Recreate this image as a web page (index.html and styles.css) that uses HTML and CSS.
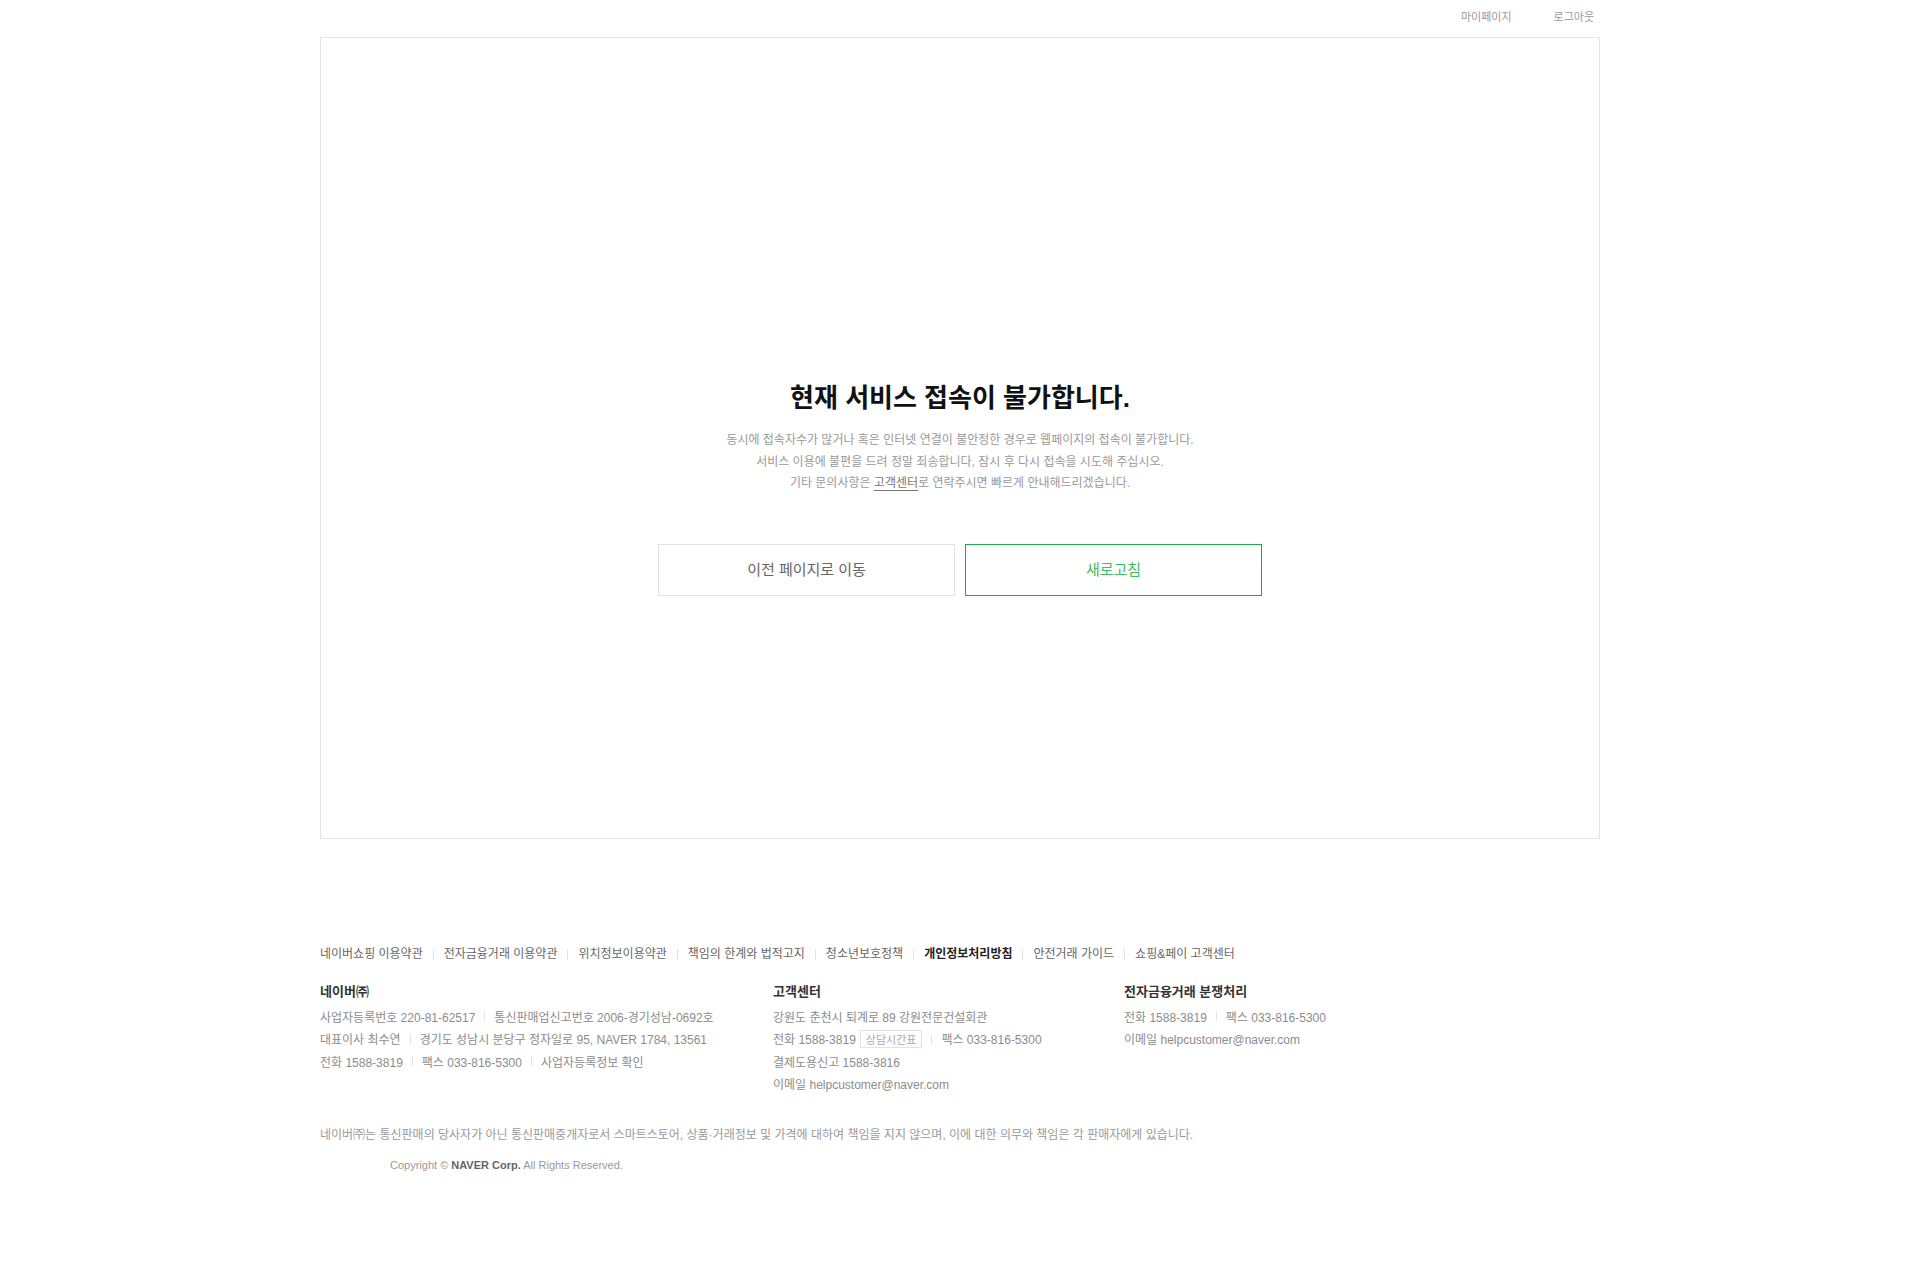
FILE: index.html
```html
<!DOCTYPE html>
<html lang="ko">
<head>
<meta charset="utf-8">
<title>네이버 스마트스토어</title>
<link rel="stylesheet" href="styles.css">
</head>
<body>
<div class="wrap">
  <header class="top">
    <a class="top-link" href="#">마이페이지</a>
    <a class="top-link" href="#">로그아웃</a>
  </header>

  <main class="error-box">
    <h2 class="error-title">현재 서비스 접속이 불가합니다.</h2>
    <p class="error-desc">
      동시에 접속자수가 많거나 혹은 인터넷 연결이 불안정한 경우로 웹페이지의 접속이 불가합니다.<br>
      서비스 이용에 불편을 드려 정말 죄송합니다, 잠시 후 다시 접속을 시도해 주십시오.<br>
      기타 문의사항은 <a class="desc-link" href="#">고객센터</a>로 연락주시면 빠르게 안내해드리겠습니다.
    </p>
    <div class="btn-row">
      <a class="btn btn-prev" href="#">이전 페이지로 이동</a>
      <a class="btn btn-reload" href="#">새로고침</a>
    </div>
  </main>

  <footer class="footer">
    <ul class="policy">
      <li><a href="#">네이버쇼핑 이용약관</a></li>
      <li><a href="#">전자금융거래 이용약관</a></li>
      <li><a href="#">위치정보이용약관</a></li>
      <li><a href="#">책임의 한계와 법적고지</a></li>
      <li><a href="#">청소년보호정책</a></li>
      <li><a class="strong" href="#">개인정보처리방침</a></li>
      <li><a href="#">안전거래 가이드</a></li>
      <li><a href="#">쇼핑&amp;페이 고객센터</a></li>
    </ul>

    <div class="info-grid">
      <div class="info-col">
        <h3 class="info-title">네이버㈜</h3>
        <p class="info-row"><span>사업자등록번호 220-81-62517</span><i class="sep"></i><span>통신판매업신고번호 2006-경기성남-0692호</span></p>
        <p class="info-row"><span>대표이사 최수연</span><i class="sep"></i><span>경기도 성남시 분당구 정자일로 95, NAVER 1784, 13561</span></p>
        <p class="info-row"><span>전화 1588-3819</span><i class="sep"></i><span>팩스 033-816-5300</span><i class="sep"></i><a href="#">사업자등록정보 확인</a></p>
      </div>
      <div class="info-col">
        <h3 class="info-title">고객센터</h3>
        <p class="info-row"><span>강원도 춘천시 퇴계로 89 강원전문건설회관</span></p>
        <p class="info-row"><span>전화 1588-3819</span><a class="chip" href="#">상담시간표</a><i class="sep"></i><span>팩스 033-816-5300</span></p>
        <p class="info-row"><span>결제도용신고 1588-3816</span></p>
        <p class="info-row"><span>이메일 helpcustomer@naver.com</span></p>
      </div>
      <div class="info-col">
        <h3 class="info-title">전자금융거래 분쟁처리</h3>
        <p class="info-row"><span>전화 1588-3819</span><i class="sep"></i><span>팩스 033-816-5300</span></p>
        <p class="info-row"><span>이메일 helpcustomer@naver.com</span></p>
      </div>
    </div>

    <p class="notice">네이버㈜는 통신판매의 당사자가 아닌 통신판매중개자로서 스마트스토어, 상품·거래정보 및 가격에 대하여 책임을 지지 않으며, 이에 대한 의무와 책임은 각 판매자에게 있습니다.</p>
    <p class="copyright">Copyright © <strong>NAVER Corp.</strong> All Rights Reserved.</p>
  </footer>
</div>
</body>
</html>
```

FILE: styles.css
```css
* {
  box-sizing: border-box;
}

html, body {
  margin: 0;
  padding: 0;
  background: #fff;
}

body {
  font-family: "Liberation Sans", "Noto Sans CJK KR", sans-serif;
  color: #333;
}

a {
  text-decoration: none;
  color: inherit;
}

.wrap {
  width: 1280px;
  margin: 0 auto;
}

/* header */
.top {
  height: 37px;
  display: flex;
  justify-content: flex-end;
  align-items: center;
  gap: 42px;
  padding: 0 6px 4px 0;
}

.top-link {
  font-size: 11px;
  line-height: 16px;
  color: #999;
}

/* error box */
.error-box {
  height: 802px;
  border: 1px solid #e4e4e4;
  padding-top: 344px;
  text-align: center;
}

.error-title {
  margin: 0;
  font-size: 26px;
  line-height: 32px;
  font-weight: 700;
  color: #111;
}

.error-desc {
  margin: 16px 0 0;
  font-size: 12px;
  line-height: 21.5px;
  color: #999;
}

.desc-link {
  color: #777;
  text-decoration: underline;
  text-underline-offset: 3px;
}

.btn-row {
  margin-top: 49px;
  display: flex;
  justify-content: center;
  gap: 10px;
}

.btn {
  width: 297px;
  height: 52px;
  display: flex;
  align-items: center;
  justify-content: center;
  padding-bottom: 3px;
  font-size: 15px;
  border: 1px solid #e2e2e2;
  color: #666;
  background: #fff;
}

.btn-reload {
  border-color: #1fa84c;
  color: #40bd63;
}

/* footer */
.footer {
  padding-top: 106px;
}

.policy {
  list-style: none;
  margin: 0;
  padding: 0;
  display: flex;
  align-items: center;
  font-size: 12px;
  line-height: 18px;
  color: #666;
}

.policy li {
  display: flex;
  align-items: center;
}

.policy li + li::before {
  content: "";
  width: 1px;
  height: 11px;
  background: #e3e3e3;
  margin: 0 10px;
}

.policy .strong {
  color: #222;
  font-weight: 700;
}

.info-grid {
  margin-top: 20px;
  display: grid;
  grid-template-columns: 453px 351px 1fr;
}

.info-title {
  margin: 0 0 4px;
  font-size: 13px;
  line-height: 18px;
  font-weight: 700;
  color: #333;
}

.info-row {
  margin: 0;
  display: flex;
  align-items: center;
  height: 22.5px;
  font-size: 12px;
  color: #8c8c8c;
  white-space: nowrap;
}

.sep {
  display: inline-block;
  width: 1px;
  height: 10px;
  background: #e3e3e3;
  margin: 0 9px;
}

.chip {
  margin-left: 4px;
  height: 18px;
  padding: 0 5px;
  display: inline-flex;
  align-items: center;
  border: 1px solid #e3e3e3;
  font-size: 11px;
  color: #aaa;
}

.notice {
  margin: 31px 0 0;
  font-size: 12px;
  line-height: 18px;
  color: #999;
}

.copyright {
  margin: 13px 0 0;
  padding-left: 70px;
  font-size: 11px;
  line-height: 16px;
  color: #999;
}

.copyright strong {
  color: #666;
}
```
